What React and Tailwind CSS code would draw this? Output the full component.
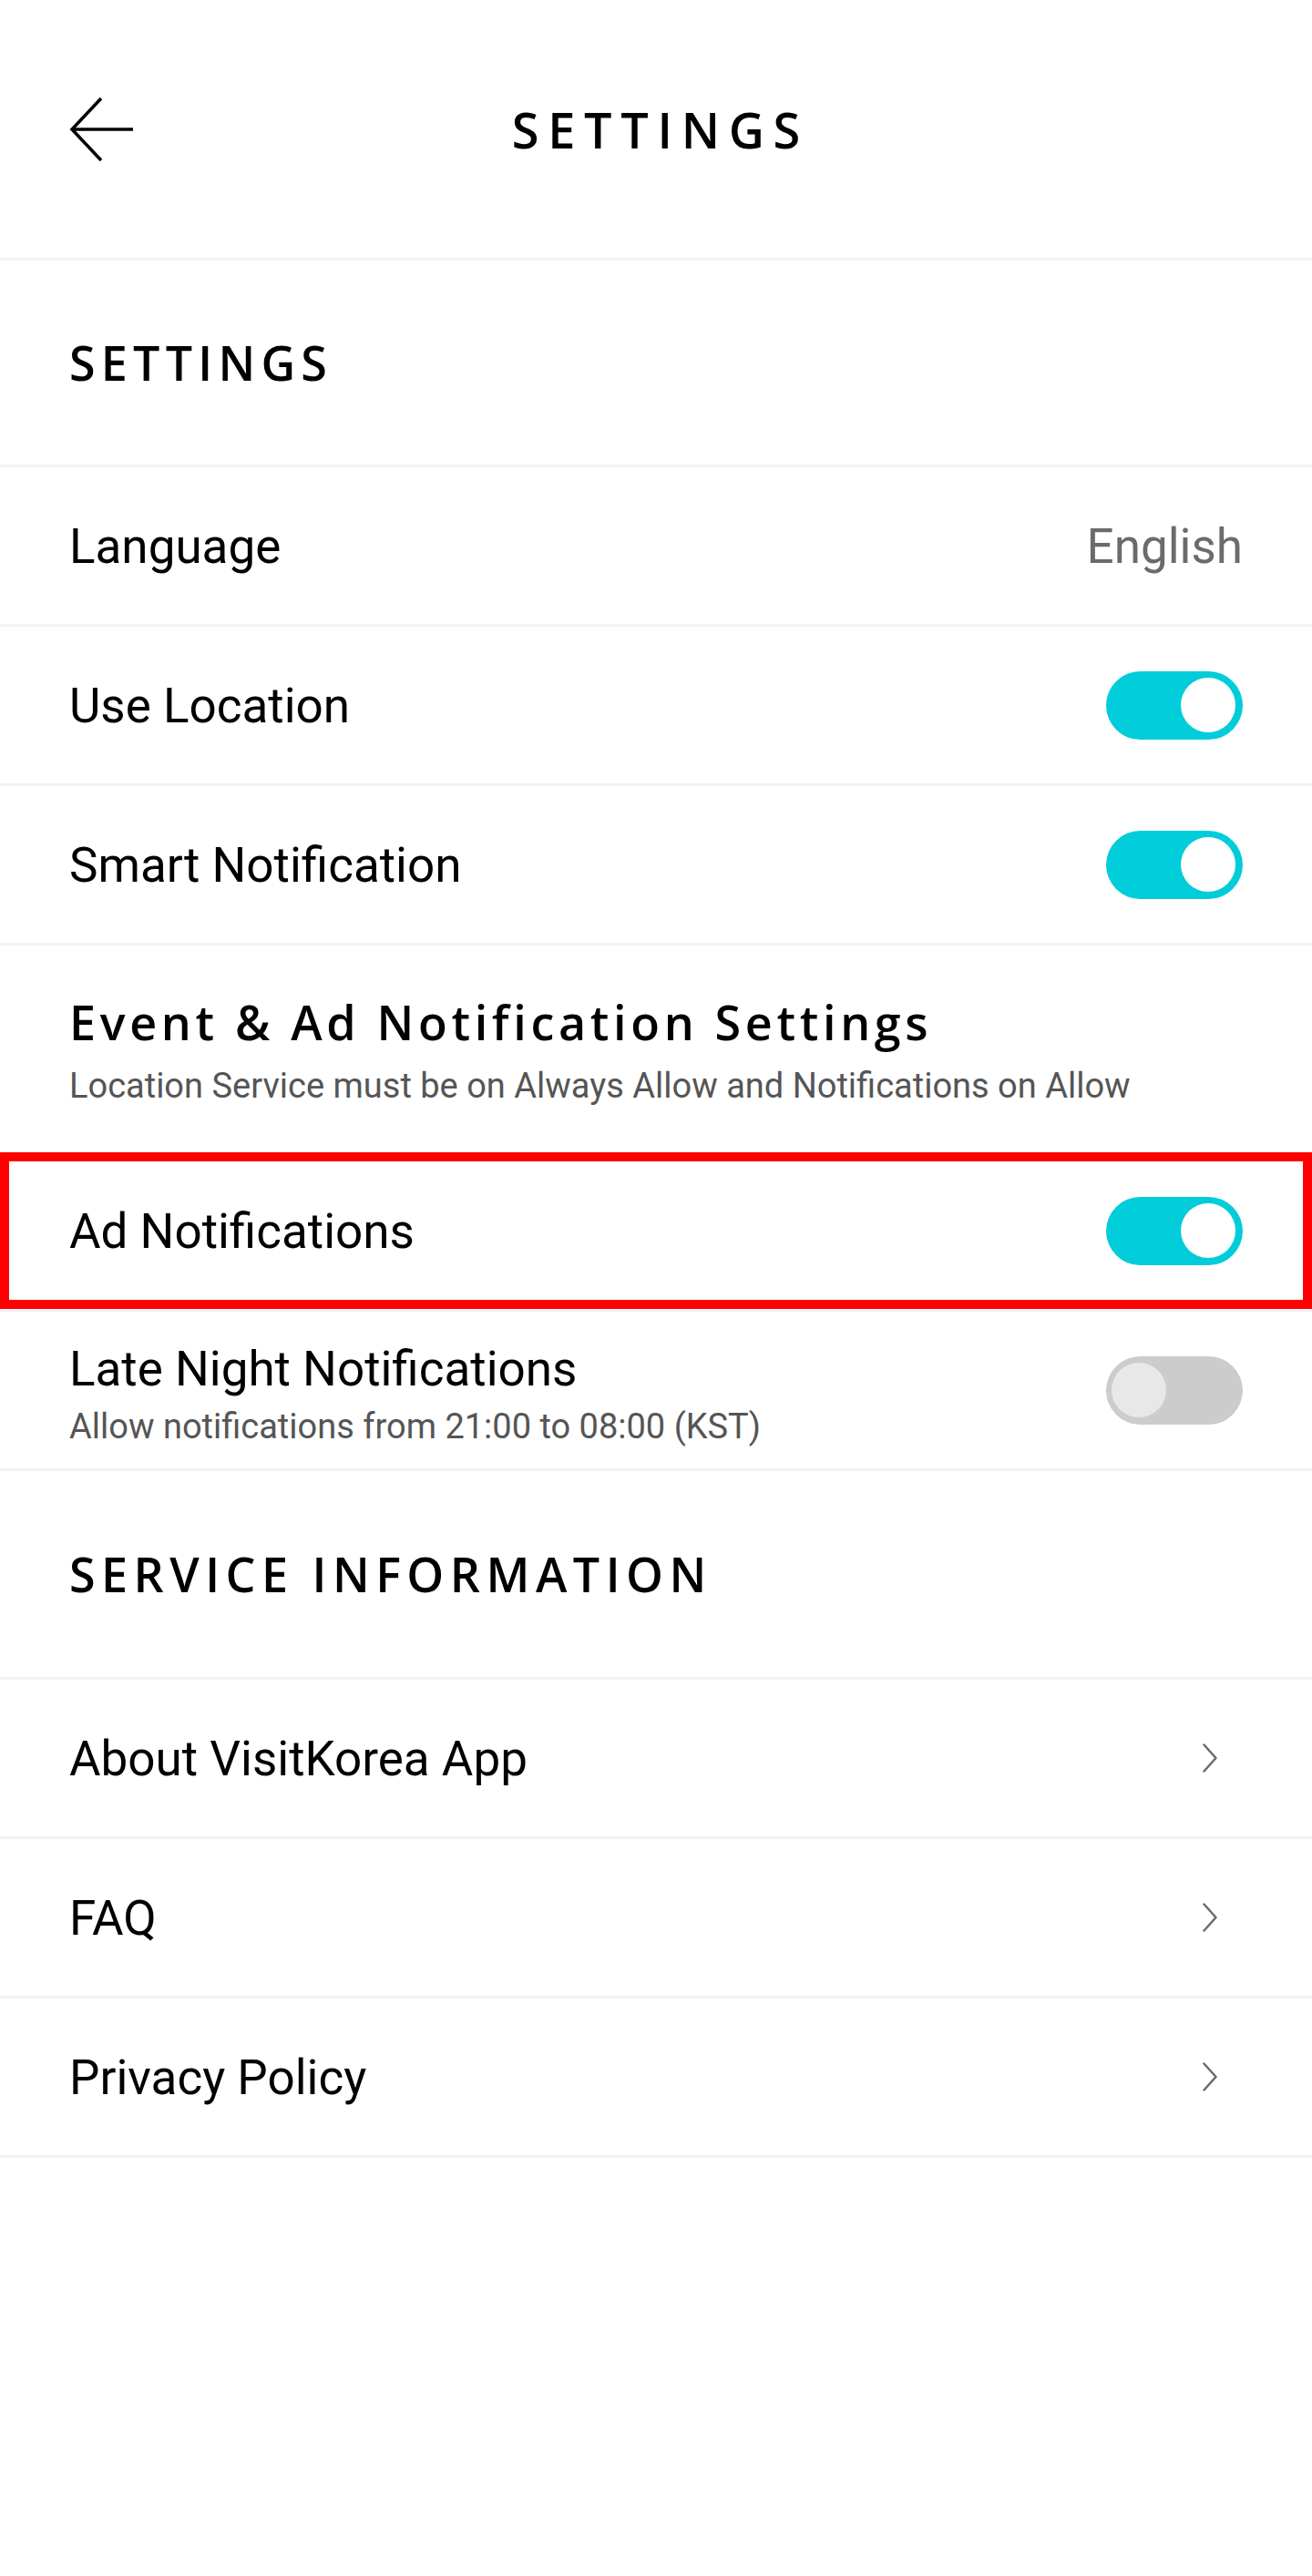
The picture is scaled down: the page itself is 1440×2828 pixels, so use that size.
import React, { useState } from 'react';

const heading = { fontFamily: '"Open Sans", Lato, sans-serif' };
const body = { fontFamily: 'Roboto, "Noto Sans", sans-serif' };

// Toggle switch, cyan when on, grey when off
const Toggle = ({ on, onChange }) => (
  <button
    onClick={onChange}
    className={`relative w-[150px] h-[75px] rounded-full shrink-0 ${on ? 'bg-[#00cdd9]' : 'bg-[#cccccc]'}`}
  >
    <span
      className={`absolute top-[7.5px] w-[60px] h-[60px] rounded-full ${on ? 'right-[8px] bg-white' : 'left-[6px] bg-[#e8e8e8]'}`}
    />
  </button>
);

const Chevron = () => (
  <svg width="16" height="32" viewBox="0 0 16 32" fill="none" className="mr-[28px]">
    <polyline points="1.5,1.5 14.5,16 1.5,30.5" stroke="#6b6b6b" strokeWidth="2.5" strokeLinecap="round" strokeLinejoin="round" />
  </svg>
);

const Row = ({ children, className = '' }) => (
  <div className={`relative h-[175px] flex items-center justify-between pl-[76px] pr-[76px] border-b-[3px] border-[#f3f3f3] ${className}`}>
    {children}
  </div>
);

const App = () => {
  const [location, setLocation] = useState(true);
  const [smart, setSmart] = useState(true);
  const [ad, setAd] = useState(true);
  const [lateNight, setLateNight] = useState(false);

  return (
    <div className="w-[1440px] min-h-[2828px] bg-white text-black">
      {/* Top bar */}
      <div className="h-[286px] grid grid-cols-[1fr_auto_1fr] items-center px-[76px] border-b-[3px] border-[#f3f3f3]">
        <svg width="72" height="72" viewBox="0 0 72 72" fill="none">
          <path d="M35 2 L3 36 L35 70" stroke="#000" strokeWidth="3.5" />
          <path d="M3 36 H70" stroke="#000" strokeWidth="3.5" />
        </svg>
        <h1 style={heading} className="text-[54px] font-semibold tracking-[0.18em] leading-none pl-[0.18em]">SETTINGS</h1>
        <div />
      </div>

      {/* Settings section */}
      <div className="h-[227px] flex items-center px-[76px] border-b-[3px] border-[#f3f3f3]">
        <h2 style={heading} className="text-[52px] font-semibold tracking-[0.12em] leading-none">SETTINGS</h2>
      </div>

      <div style={body}>
        <Row>
          <span className="text-[53px] pt-[4px]">Language</span>
          <span className="text-[53px] pt-[4px] text-[#6b6b6b]">English</span>
        </Row>
        <Row>
          <span className="text-[53px] pt-[4px]">Use Location</span>
          <Toggle on={location} onChange={() => setLocation(!location)} />
        </Row>
        <Row>
          <span className="text-[53px] pt-[4px]">Smart Notification</span>
          <Toggle on={smart} onChange={() => setSmart(!smart)} />
        </Row>
      </div>

      {/* Event & Ad section */}
      <div className="h-[227px] flex flex-col justify-center px-[76px] pt-[4px]">
        <h2 style={heading} className="text-[52px] font-semibold tracking-[0.09em] leading-none">Event &amp; Ad Notification Settings</h2>
        <p style={body} className="text-[38px] text-[#555] leading-none mt-[25px]">
          Location Service must be on Always Allow and Notifications on Allow
        </p>
      </div>

      <div style={body}>
        <Row className="border-b-0">
          <span className="text-[53px] pt-[4px]">Ad Notifications</span>
          <Toggle on={ad} onChange={() => setAd(!ad)} />
          {/* highlight box */}
          <div className="absolute inset-0 border-[10px] border-[#ff0000] pointer-events-none" />
        </Row>
        <Row>
          <div className="flex flex-col pt-[10px]">
            <span className="text-[53px] leading-none">Late Night Notifications</span>
            <span className="text-[38px] text-[#555] leading-none mt-[17px]">Allow notifications from 21:00 to 08:00 (KST)</span>
          </div>
          <Toggle on={lateNight} onChange={() => setLateNight(!lateNight)} />
        </Row>
      </div>

      {/* Service information */}
      <div className="h-[229px] flex items-center px-[76px] border-b-[3px] border-[#f3f3f3]">
        <h2 style={heading} className="text-[52px] font-semibold tracking-[0.125em] leading-none">SERVICE INFORMATION</h2>
      </div>

      <div style={body}>
        {['About VisitKorea App', 'FAQ', 'Privacy Policy'].map((label) => (
          <Row key={label}>
            <span className="text-[53px] pt-[4px]">{label}</span>
            <Chevron />
          </Row>
        ))}
      </div>
    </div>
  );
};

export default App;
